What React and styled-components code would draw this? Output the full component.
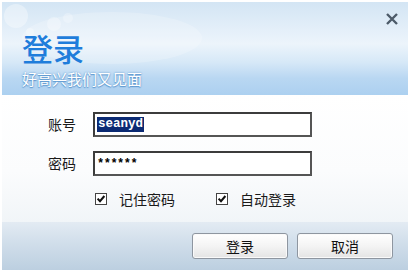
import React from 'react';
import styled, { createGlobalStyle } from 'styled-components';

const GlobalStyle = createGlobalStyle`
  html, body {
    margin: 0;
    padding: 0;
    background: #ffffff;
  }
  body {
    font-family: "Noto Sans CJK SC", "Noto Sans", sans-serif;
  }
`;

const Frame = styled.div`
  width: 406px;
  height: 268px;
  margin: 2px;
  display: flex;
  flex-direction: column;
  overflow: hidden;
`;

const Header = styled.div`
  position: relative;
  height: 93px;
  flex: none;
  box-sizing: border-box;
  padding: 26px 0 0 20px;
  background: linear-gradient(
    180deg,
    #d3e5f4 0%,
    #e4eff9 30%,
    #ecf4fb 45%,
    #d6e8f7 65%,
    #b9d7f2 82%,
    #acd0f0 100%
  );
`;

const Bubbles = styled.svg`
  position: absolute;
  left: 0;
  top: 0;
  z-index: 0;
  pointer-events: none;
`;

const Title = styled.h1`
  position: relative;
  z-index: 1;
  margin: 0;
  font-size: 31px;
  line-height: 40px;
  font-weight: 500;
  color: #1f7ddb;
`;

const Subtitle = styled.div`
  position: relative;
  z-index: 1;
  margin-top: 1px;
  font-size: 15px;
  line-height: 20px;
  color: #ffffff;
  text-shadow: 0 0 2px #5590c8, 0 1px 1px #5f9ad2;
`;

const Close = styled.div`
  position: absolute;
  right: 8px;
  top: 9px;
  width: 16px;
  height: 16px;
  display: flex;
  align-items: center;
  justify-content: center;
`;

const Body = styled.div`
  flex: 1;
  box-sizing: border-box;
  padding: 17px 0 0 46px;
  background: linear-gradient(180deg, #ffffff 0%, #fbfcfd 60%, #f1f5f8 100%);
  display: flex;
  flex-direction: column;
`;

const Row = styled.div`
  display: flex;
  align-items: center;
  height: 25px;
  margin-bottom: 14px;
`;

const Label = styled.label`
  width: 45px;
  font-size: 14px;
  color: #1a1a1a;
  line-height: 25px;
`;

const Input = styled.div`
  width: 219px;
  height: 25px;
  box-sizing: border-box;
  border: 2px solid #3c3c3c;
  border-right-color: #555;
  border-bottom-color: #555;
  background: #ffffff;
  display: flex;
  align-items: center;
  padding-left: 2px;
  font-family: "Liberation Mono", "DejaVu Sans Mono", monospace;
  font-size: 12.5px;
  color: #000;
`;

const Selected = styled.span`
  background: #0b2a73;
  color: #ffffff;
  padding: 0 1px;
  line-height: 15px;
  font-weight: 700;
`;

const Masked = styled.span`
  font-size: 12px;
  letter-spacing: -0.5px;
  font-weight: 700;
`;

const Options = styled.div`
  display: flex;
  align-items: center;
  margin-left: 47px;
  margin-top: -1px;
`;

const Option = styled.div`
  display: flex;
  align-items: center;
  width: ${p => p.w}px;
  font-size: 14px;
  color: #1a1a1a;
`;

const Box = styled.span`
  width: 12px;
  height: 12px;
  box-sizing: border-box;
  border: 1px solid #444;
  background: #fff;
  display: inline-flex;
  align-items: center;
  justify-content: center;
  margin-right: 12px;
`;

const Footer = styled.div`
  height: 48px;
  flex: none;
  box-sizing: border-box;
  padding: 11px 15px 0 0;
  display: flex;
  justify-content: flex-end;
  gap: 9px;
  background: linear-gradient(180deg, #e3ebf3 0%, #d2dfeb 40%, #bccfe0 100%);
`;

const Button = styled.button`
  width: 96px;
  height: 26px;
  box-sizing: border-box;
  border: 1px solid #8e96a0;
  border-radius: 3px;
  background: linear-gradient(180deg, #ffffff 0%, #f4f4f4 50%, #e4e4e4 100%);
  font-family: "Noto Sans CJK SC", "Noto Sans", sans-serif;
  font-size: 14px;
  color: #111;
  padding: 0;
  box-shadow: inset 0 0 0 1px #fafafa;
`;

function Check() {
  return (
    <Box>
      <svg width="10" height="10" viewBox="0 0 10 10">
        <path d="M1.6 4.6 L4 7.2 L8.4 2" fill="none" stroke="#111" strokeWidth="2" />
      </svg>
    </Box>
  );
}

export default function App() {
  return (
    <>
      <GlobalStyle />
      <Frame>
        <Header>
          <Bubbles width="240" height="93">
            <circle cx="14" cy="14" r="12" fill="#ffffff" opacity="0.35" />
            <circle cx="52" cy="22" r="7" fill="#ffffff" opacity="0.3" />
            <circle cx="66" cy="16" r="5" fill="#ffffff" opacity="0.25" />
            <circle cx="28" cy="30" r="4" fill="#ffffff" opacity="0.3" />
            <ellipse cx="110" cy="36" rx="90" ry="26" fill="#ffffff" opacity="0.2" />
          </Bubbles>
          <Close>
            <svg width="14" height="12" viewBox="0 0 14 12">
              <path d="M2 1 L12 11 M12 1 L2 11" stroke="#4d5b69" strokeWidth="2.4" />
            </svg>
          </Close>
          <Title>登录</Title>
          <Subtitle>好高兴我们又见面</Subtitle>
        </Header>
        <Body>
          <Row>
            <Label>账号</Label>
            <Input>
              <Selected>seanyd</Selected>
            </Input>
          </Row>
          <Row>
            <Label>密码</Label>
            <Input>
              <Masked>******</Masked>
            </Input>
          </Row>
          <Options>
            <Option w={121}>
              <Check />
              记住密码
            </Option>
            <Option w={100}>
              <Check />
              自动登录
            </Option>
          </Options>
        </Body>
        <Footer>
          <Button>登录</Button>
          <Button>取消</Button>
        </Footer>
      </Frame>
    </>
  );
}
